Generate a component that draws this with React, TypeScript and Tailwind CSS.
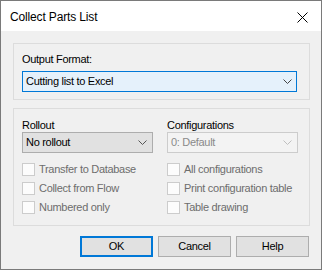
import React from "react";

const font = { fontFamily: '"Liberation Sans", Arial, sans-serif' };

function Chevron({ color }: { color: string }) {
  return (
    <svg width="9" height="5" viewBox="0 0 9 5" fill="none">
      <path d="M0.5 0.5L4.5 4.5L8.5 0.5" stroke={color} strokeWidth="1" />
    </svg>
  );
}

function Check({ label }: { label: string }) {
  return (
    <div className="h-[19px] flex items-center gap-[4px]">
      <span className="w-[13px] h-[13px] border border-[#cccccc] bg-[#fcfcfc] shrink-0" />
      <span className="text-[#6d6d6d] whitespace-nowrap">{label}</span>
    </div>
  );
}

export default function App() {
  return (
    <div
      className="w-[322px] h-[270px] border border-[#7a7a7a] bg-[#f0f0f0] text-[11px] tracking-[-0.3px] text-black flex flex-col"
      style={font}
    >
      {/* title bar */}
      <div className="h-[30px] bg-white flex items-center justify-between pl-[9px] pr-[13px] pt-[2px]">
        <span className="text-[12px] tracking-[-0.15px]">Collect Parts List</span>
        <svg width="11" height="11" viewBox="0 0 11 11" fill="none">
          <path d="M0.5 0.5L10.5 10.5M10.5 0.5L0.5 10.5" stroke="#000" strokeWidth="1" />
        </svg>
      </div>

      {/* output format group */}
      <div className="ml-[12px] mt-[12px] w-[297px] border border-[#dcdcdc] pt-[7px] pl-[8px] pr-[12px] pb-[7px]">
        <div className="h-[16px] leading-[16px]">Output Format:</div>
        <div className="mt-[4px] h-[21px] border border-[#0078d7] bg-[#e5f1fb] flex items-center justify-between pl-[3px] pr-[4px]">
          <span>Cutting list to Excel</span>
          <Chevron color="#444444" />
        </div>
      </div>

      {/* options group */}
      <div className="ml-[12px] mt-[8px] w-[297px] border border-[#dcdcdc] pt-[9px] pl-[8px] pb-[8px] grid grid-cols-[131px_131px] gap-x-[14px]">
        <div className="flex flex-col">
          <div className="h-[14px] leading-[14px]">Rollout</div>
          <div className="h-[21px] border border-[#adadad] bg-[#e1e1e1] flex items-center justify-between pl-[3px] pr-[5px]">
            <span>No rollout</span>
            <Chevron color="#555555" />
          </div>
          <div className="mt-[7px]">
            <Check label="Transfer to Database" />
            <Check label="Collect from Flow" />
            <Check label="Numbered only" />
          </div>
        </div>
        <div className="flex flex-col">
          <div className="h-[14px] leading-[14px]">Configurations</div>
          <div className="h-[21px] border border-[#cccccc] bg-[#f3f3f3] flex items-center justify-between pl-[3px] pr-[5px]">
            <span className="text-[#8a8a8a]">0: Default</span>
            <Chevron color="#bfbfbf" />
          </div>
          <div className="mt-[7px]">
            <Check label="All configurations" />
            <Check label="Print configuration table" />
            <Check label="Table drawing" />
          </div>
        </div>
      </div>

      {/* buttons */}
      <div className="mt-[10px] flex justify-end gap-[5px] pr-[12px]">
        <button className="w-[73px] h-[21px] border-2 border-[#0078d7] bg-[#e1e1e1]">OK</button>
        <button className="w-[73px] h-[21px] border border-[#adadad] bg-[#e1e1e1]">Cancel</button>
        <button className="w-[73px] h-[21px] border border-[#adadad] bg-[#e1e1e1]">Help</button>
      </div>
    </div>
  );
}
